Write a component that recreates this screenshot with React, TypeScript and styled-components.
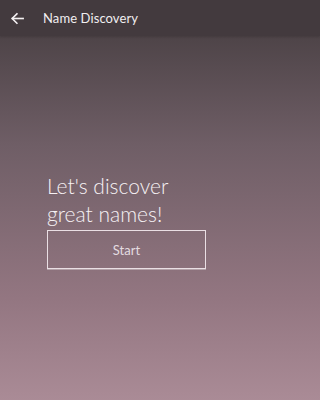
import { FC } from 'react';
import styled, { createGlobalStyle } from 'styled-components';

const GlobalStyle = createGlobalStyle`
  html, body {
    margin: 0;
    padding: 0;
  }
  body {
    font-family: 'Lato', 'Open Sans', sans-serif;
  }
`;

const Screen = styled.div`
  width: 100%;
  min-width: 252px;
  height: 100vh;
  min-height: 400px;
  display: flex;
  flex-direction: column;
  overflow: hidden;
`;

const AppBar = styled.header`
  height: 36px;
  flex-shrink: 0;
  background: #433a3e;
  display: flex;
  align-items: center;
  padding: 0 0 0 9px;
  gap: 17px;
  box-shadow: 0 1px 2px rgba(0, 0, 0, 0.15);
  position: relative;
  z-index: 1;
`;

const BackButton = styled.button`
  background: none;
  border: none;
  padding: 0;
  width: 17px;
  height: 17px;
  display: flex;
  align-items: center;
  justify-content: center;
  cursor: pointer;
`;

const AppTitle = styled.h1`
  margin: 0;
  color: #f1eef0;
  font-size: 13px;
  font-weight: 400;
  letter-spacing: 0.1px;
`;

const Body = styled.main`
  flex: 1;
  background: linear-gradient(180deg, #4e4448 0%, #6f5e66 30%, #937681 72%, #aa8b96 100%);
  display: flex;
  flex-direction: column;
  padding: 136px 47px 0 47px;
`;

const Heading = styled.h2`
  margin: 0;
  color: #f6f1f4;
  font-size: 21px;
  font-weight: 300;
  line-height: 28px;
`;

const StartButton = styled.button`
  margin-top: 2px;
  width: 159px;
  height: 39px;
  background: transparent;
  border: 1px solid #eadfe4;
  box-shadow: 0 1px 0 rgba(255, 255, 255, 0.35);
  color: #e4dce0;
  font-family: 'Lato', 'Open Sans', sans-serif;
  font-size: 13px;
  font-weight: 400;
  cursor: pointer;
`;

const ArrowIcon: FC = () => (
  <svg width="15" height="15" viewBox="0 0 24 24" fill="none" stroke="#f4f0f2" strokeWidth="2.6" strokeLinecap="square">
    <path d="M21 12H4" />
    <path d="M11 4.5L3.5 12L11 19.5" />
  </svg>
);

const App: FC = () => (
  <>
    <GlobalStyle />
    <Screen>
      <AppBar>
        <BackButton aria-label="Back">
          <ArrowIcon />
        </BackButton>
        <AppTitle>Name Discovery</AppTitle>
      </AppBar>
      <Body>
        <Heading>
          Let's discover
          <br />
          great names!
        </Heading>
        <StartButton>Start</StartButton>
      </Body>
    </Screen>
  </>
);

export default App;
